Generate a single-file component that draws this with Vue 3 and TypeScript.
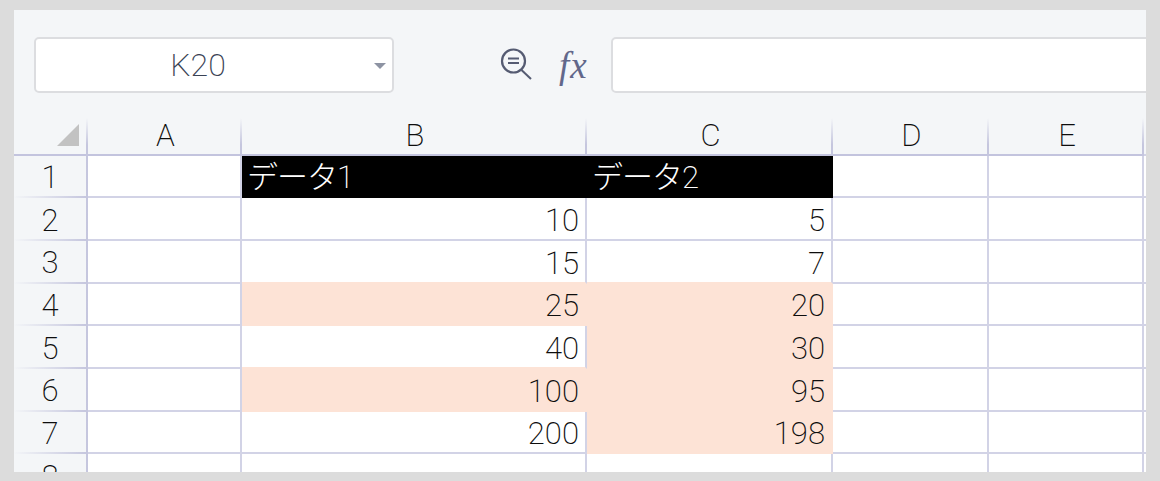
<script setup lang="ts">
type Fill = '' | 'black' | 'peach' | 'above-peach';
interface Cell { text: string; fill: Fill; left?: boolean }
interface Row { n: number; b: Cell; c: Cell }

const columns = ['A', 'B', 'C', 'D', 'E'];
const rows: Row[] = [
  { n: 1, b: { text: 'データ1', fill: 'black', left: true }, c: { text: 'データ2', fill: 'black', left: true } },
  { n: 2, b: { text: '10', fill: '' }, c: { text: '5', fill: '' } },
  { n: 3, b: { text: '15', fill: 'above-peach' }, c: { text: '7', fill: 'above-peach' } },
  { n: 4, b: { text: '25', fill: 'peach' }, c: { text: '20', fill: 'peach' } },
  { n: 5, b: { text: '40', fill: 'above-peach' }, c: { text: '30', fill: 'peach' } },
  { n: 6, b: { text: '100', fill: 'peach' }, c: { text: '95', fill: 'peach' } },
  { n: 7, b: { text: '200', fill: '' }, c: { text: '198', fill: 'peach' } },
  { n: 8, b: { text: '', fill: '' }, c: { text: '', fill: '' } },
];
</script>

<template>
  <div class="page">
    <div class="window">
      <div class="toolbar">
        <div class="name-box">
          <span class="name-text">K20</span>
          <span class="caret"></span>
        </div>
        <svg class="zoom-icon" width="34" height="34" viewBox="0 0 34 34" fill="none" stroke="#555b72">
          <circle cx="13.5" cy="13" r="11.5" stroke-width="2.2" />
          <path d="M8 10.5h11M8 15h11" stroke-width="2" />
          <path d="M21.5 22l9.5 9" stroke-width="2" />
        </svg>
        <span class="fx">fx</span>
        <div class="formula-box"></div>
      </div>

      <div class="sheet">
        <div class="corner"><span class="triangle"></span></div>
        <div v-for="col in columns" :key="col" class="col-head">{{ col }}</div>
        <div class="tail tail-head"></div>

        <template v-for="row in rows" :key="row.n">
          <div class="row-head">{{ row.n }}</div>
          <div class="cell"></div>
          <div class="cell" :class="[row.b.fill, { left: row.b.left }]">{{ row.b.text }}</div>
          <div class="cell" :class="[row.c.fill, { left: row.c.left }]">{{ row.c.text }}</div>
          <div class="cell"></div>
          <div class="cell"></div>
          <div class="tail"></div>
        </template>
      </div>
    </div>
  </div>
</template>

<style scoped>
.page {
  width: 1160px;
  height: 481px;
  box-sizing: border-box;
  padding: 10px 14px 9px;
  background: #dcdcdc;
  overflow: hidden;
  font-family: Roboto, "Noto Sans CJK JP", sans-serif;
  font-weight: 200;
}
.window {
  height: 100%;
  background: #f4f6f8;
  overflow: hidden;
}
.toolbar {
  display: flex;
  align-items: center;
  height: 108px;
  padding: 27px 0 25px 20px;
  box-sizing: border-box;
}
.name-box {
  width: 360px;
  height: 56px;
  box-sizing: border-box;
  flex: none;
  display: flex;
  align-items: center;
  justify-content: center;
  position: relative;
  background: #fff;
  border: 2px solid #dcdde0;
  border-radius: 5px;
  padding-right: 32px;
}
.name-text {
  font-size: 32px;
  color: #3a4254;
  line-height: 1;
}
.caret {
  position: absolute;
  right: 6px;
  top: 24px;
  width: 0;
  height: 0;
  border-left: 6px solid transparent;
  border-right: 6px solid transparent;
  border-top: 6px solid #8d93a3;
}
.zoom-icon {
  flex: none;
  margin-left: 106px;
}
.fx {
  flex: none;
  margin-left: 25px;
  width: 33px;
  font-family: "Liberation Serif", serif;
  font-style: italic;
  font-size: 37px;
  font-weight: 400;
  letter-spacing: 1px;
  color: #62678a;
  line-height: 1;
}
.formula-box {
  flex: none;
  width: 560px;
  height: 56px;
  box-sizing: border-box;
  margin-left: 19px;
  background: #fff;
  border: 2px solid #dcdde0;
  border-radius: 5px;
}
.sheet {
  display: grid;
  grid-template-columns: 74px 154px 345px 246px 156px 155px 2px;
  grid-template-rows: 37.5px;
  grid-auto-rows: 42.7px;
  font-size: 31px;
  color: #0d0d0d;
  line-height: 1;
}
.corner,
.col-head {
  box-sizing: border-box;
  display: flex;
  align-items: center;
  justify-content: center;
  padding: 0 0 0 1px;
  border-bottom: 2px solid #c3c4de;
  position: relative;
}
.col-head::after,
.corner::after {
  content: "";
  position: absolute;
  right: 0;
  top: 0;
  bottom: -2px;
  width: 2px;
  background: linear-gradient(to bottom, rgba(197, 198, 222, 0), #c5c6de 70%);
}
.triangle {
  position: absolute;
  left: 43px;
  top: 6px;
  width: 0;
  height: 0;
  border-left: 22px solid transparent;
  border-bottom: 22px solid #c2c2c2;
}
.tail-head {
  border-bottom: 2px solid #c3c4de;
}
.tail {
  background: #fff;
  box-sizing: border-box;
  border-bottom: 2px solid #d2d3e6;
}
.tail-head {
  background: transparent;
}
.row-head {
  box-sizing: border-box;
  display: flex;
  align-items: center;
  justify-content: center;
  padding: 3px 0 0 0;
  border-right: 2px solid #c5c6de;
  border-bottom: 2px solid transparent;
  border-image: linear-gradient(to right, rgba(197, 198, 222, 0), #c5c6de) 1;
}
.cell {
  box-sizing: border-box;
  display: flex;
  align-items: center;
  justify-content: flex-end;
  padding: 4px 6px 0 5px;
  background: #fff;
  border-right: 2px solid #d2d3e6;
  border-bottom: 2px solid #d2d3e6;
  white-space: nowrap;
}
.cell.black {
  background: #000;
  color: #fff;
  border-color: #000;
}
.cell.left {
  justify-content: flex-start;
  letter-spacing: -1px;
}
.cell.peach {
  background: #fde3d6;
  border-color: #fde3d6;
}
.cell.above-peach {
  border-bottom-color: #fde3d6;
}
</style>
